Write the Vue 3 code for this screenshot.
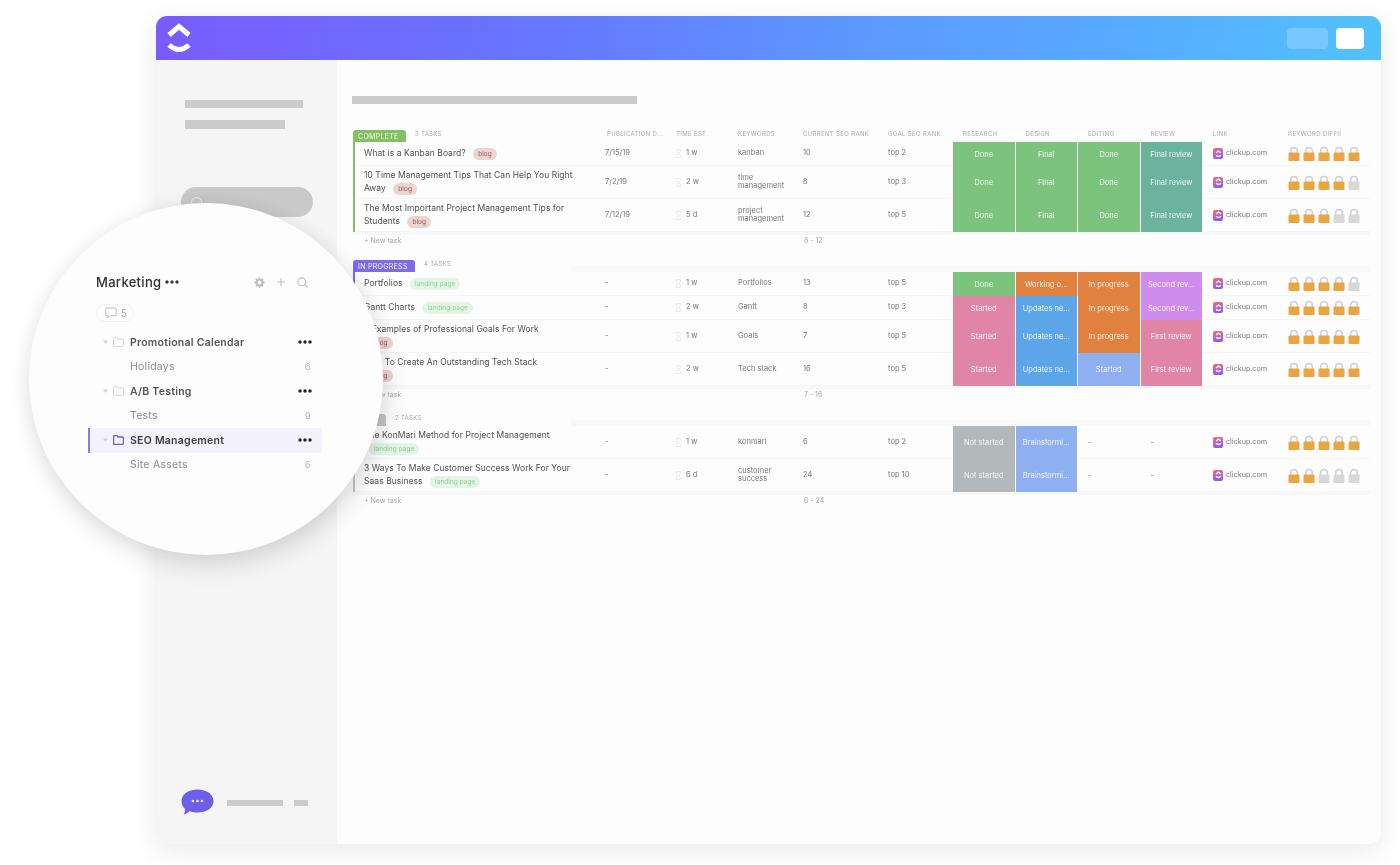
<template>
  <div class="page">
    <div class="window">
      <header class="topbar">
        <svg class="logo" width="26" height="31" viewBox="0 0 26 31">
          <path d="M3 12 L13 3.500 L23 12" fill="none" stroke="#fff" stroke-width="5" stroke-linejoin="miter" />
          <path d="M3 22 Q13 31 23 22" fill="none" stroke="#fff" stroke-width="5" />
        </svg>
        <div class="top-btn top-btn-soft"></div>
        <div class="top-btn top-btn-white"></div>
      </header>

      <div class="body">
        <aside class="sidebar">
          <div class="bar bar-one"></div>
          <div class="bar bar-two"></div>
          <div class="search-pill"><span class="search-ring"></span></div>
          <div class="chat-row">
            <svg width="33" height="27" viewBox="0 0 33 27">
              <path d="M16.500 0.500 C26 0.500 32.500 5.500 32.500 12 C32.500 19 25.500 23.500 16.500 23.500 C13.500 23.500 11 23.200 8.500 22.300 C7 23.800 5 25.200 2.500 25.500 C3.700 24 4.300 22 4.200 20 C1.800 18 0.500 15 0.500 12 C0.500 5.500 7 0.500 16.500 0.500 Z" fill="#6f5fe6" />
              <circle cx="12" cy="12" r="1.300" fill="#e8e4ff" />
              <circle cx="16.500" cy="12" r="1.300" fill="#e8e4ff" />
              <circle cx="21" cy="12" r="1.300" fill="#e8e4ff" />
            </svg>
            <div class="bar chat-bar-long"></div>
            <div class="bar chat-bar-short"></div>
          </div>
        </aside>

        <main class="content">
          <div class="bar page-title"></div>

          <section v-for="group in groups" :key="group.name" class="group">
            <div class="table-row group-head">
              <div class="head-first">
                <span class="status-tag" :class="group.tagClass">{{ group.name }}</span>
                <span class="task-count">{{ group.rows.length }} TASKS</span>
              </div>
              <template v-if="group.showColumns">
                <span v-for="col in columns" :key="col.label" class="col-label" :class="col.cls">{{ col.label }}</span>
              </template>
              <div v-else class="head-band"></div>
            </div>

            <div class="group-rows" :class="group.tagClass">
              <div v-for="row in group.rows" :key="row.title" class="table-row task-row">
                <div class="cell name-cell">
                  <div class="task-title">
                    {{ row.title }}
                    <span class="tag" :class="row.tag === 'blog' ? 'tag-blog' : 'tag-landing'">{{ row.tag }}</span>
                  </div>
                </div>
                <div class="cell date-cell">{{ row.date }}</div>
                <div class="cell time-cell">
                  <svg width="5" height="9" viewBox="0 0 5 9">
                    <path d="M0.500 0.500 H4.500 V2.500 L2.800 4.500 L4.500 6.500 V8.500 H0.500 V6.500 L2.200 4.500 L0.500 2.500 Z" fill="none" stroke="#e2e2e2" stroke-width="0.800" />
                  </svg>
                  <span>{{ row.time }}</span>
                </div>
                <div class="cell keyword-cell">{{ row.keyword }}</div>
                <div class="cell">{{ row.rank }}</div>
                <div class="cell">{{ row.goal }}</div>
                <div
                  v-for="(status, i) in row.statuses"
                  :key="i"
                  class="status-cell"
                  :class="status.color"
                >{{ status.text }}</div>
                <div class="cell link-cell">
                  <span class="site-icon">
                    <svg width="7" height="8" viewBox="0 0 7 8">
                      <path d="M1 3 L3.500 1 L6 3" fill="none" stroke="#fff" stroke-width="1.200" />
                      <path d="M1 5.300 Q3.500 7.700 6 5.300" fill="none" stroke="#fff" stroke-width="1.200" />
                    </svg>
                  </span>
                  <span>clickup.com</span>
                </div>
                <div class="cell lock-cell">
                  <svg v-for="n in 5" :key="n" width="12" height="15" viewBox="0 0 12 15">
                    <path d="M2.700 8 V5 C2.700 0.300 9.300 0.300 9.300 5 V8" fill="none" stroke="#cdced6" stroke-width="1.500" />
                    <rect x="0.500" y="6.500" width="11" height="8.500" rx="1" :fill="n <= row.locks ? '#e8a540' : '#d8d8d8'" />
                  </svg>
                </div>
              </div>
            </div>

            <div class="table-row new-task">
              <div class="new-task-label">+ New task</div>
              <div class="new-task-range">{{ group.range }}</div>
            </div>
          </section>
        </main>
      </div>
    </div>

    <div class="lens">
      <div class="lens-head">
        <span class="lens-title">Marketing</span>
        <svg class="title-dots" width="14" height="4" viewBox="0 0 14 4">
          <circle cx="2" cy="2" r="1.700" /><circle cx="7" cy="2" r="1.700" /><circle cx="12" cy="2" r="1.700" />
        </svg>
        <div class="lens-tools">
          <svg width="11" height="11" viewBox="0 0 12 12">
            <circle cx="6" cy="6" r="3.300" fill="none" stroke="#bdbdbd" stroke-width="2.400" />
            <path d="M6 0.300 V2 M6 10 V11.700 M0.300 6 H2 M10 6 H11.700 M2 2 L3.100 3.100 M8.900 8.900 L10 10 M10 2 L8.900 3.100 M3.100 8.900 L2 10" stroke="#bdbdbd" stroke-width="1.600" />
          </svg>
          <svg width="10" height="10" viewBox="0 0 10 10">
            <path d="M5 1 V9 M1 5 H9" stroke="#c4c4c4" stroke-width="1.200" />
          </svg>
          <svg width="11" height="11" viewBox="0 0 11 11">
            <circle cx="4.800" cy="4.800" r="3.900" fill="none" stroke="#bdbdbd" stroke-width="1.100" />
            <path d="M7.700 7.700 L10.300 10.300" stroke="#bdbdbd" stroke-width="1.100" />
          </svg>
        </div>
      </div>

      <div class="comment-pill">
        <svg width="12" height="12" viewBox="0 0 12 12">
          <path d="M1.500 1 H10.500 Q11.200 1 11.200 1.700 V8 Q11.200 8.700 10.500 8.700 H5 L2.800 11 V8.700 H1.500 Q0.800 8.700 0.800 8 V1.700 Q0.800 1 1.500 1 Z" fill="none" stroke="#b5b5b5" stroke-width="0.900" />
        </svg>
        <span>5</span>
      </div>

      <ul class="tree">
        <li v-for="item in tree" :key="item.label" class="tree-row" :class="{ 'tree-active': item.active, 'tree-folder': item.folder }">
          <template v-if="item.folder">
            <svg class="tree-caret" width="5" height="4" viewBox="0 0 5 4"><path d="M0 0.500 H5 L2.500 3.800 Z" fill="#d0d0d0" /></svg>
            <svg class="tree-icon" width="11" height="10" viewBox="0 0 11 10">
              <path d="M0.600 1.500 Q0.600 0.600 1.500 0.600 H4 L5 2 H9.500 Q10.400 2 10.400 2.900 V8.500 Q10.400 9.400 9.500 9.400 H1.500 Q0.600 9.400 0.600 8.500 Z" fill="none" :stroke="item.active ? '#6f5fe6' : '#cfcfcf'" :stroke-width="item.active ? 1.300 : 0.900" />
            </svg>
          </template>
          <span class="tree-label">{{ item.label }}</span>
          <svg v-if="item.folder" class="tree-dots" width="14" height="4" viewBox="0 0 14 4">
            <circle cx="2" cy="2" r="1.700" /><circle cx="7" cy="2" r="1.700" /><circle cx="12" cy="2" r="1.700" />
          </svg>
          <span v-else class="tree-count">{{ item.count }}</span>
        </li>
      </ul>
    </div>
  </div>
</template>

<script setup>
const columns = [
  { label: 'Publication d...', cls: 'col-date' },
  { label: 'Time est.' },
  { label: 'Keywords' },
  { label: 'Current SEO rank' },
  { label: 'Goal SEO rank' },
  { label: 'Research', cls: 'col-status' },
  { label: 'Design', cls: 'col-status' },
  { label: 'Editing', cls: 'col-status' },
  { label: 'Review', cls: 'col-status' },
  { label: 'Link', cls: 'col-link' },
  { label: 'Keyword diffii' },
]

const st = (text, color) => ({ text, color })
const done = st('Done', 'c-green')
const final = st('Final', 'c-green')
const finalReview = st('Final review', 'c-teal')
const started = st('Started', 'c-pink')
const updates = st('Updates ne...', 'c-blue')
const inProgress = st('In progress', 'c-orange')
const secondRev = st('Second rev...', 'c-violet')
const firstReview = st('First review', 'c-pink')
const notStarted = st('Not started', 'c-grey')
const brainstorm = st('Brainstormi...', 'c-sky')
const none = st('-', 'c-none')

const groups = [
  {
    name: 'COMPLETE',
    tagClass: 'is-complete',
    showColumns: true,
    range: '8 - 12',
    rows: [
      { title: 'What is a Kanban Board?', tag: 'blog', date: '7/15/19', time: '1 w', keyword: 'kanban', rank: '10', goal: 'top 2', locks: 5, statuses: [done, final, done, finalReview] },
      { title: '10 Time Management Tips That Can Help You Right Away', tag: 'blog', date: '7/2/19', time: '2 w', keyword: 'time management', rank: '8', goal: 'top 3', locks: 4, statuses: [done, final, done, finalReview] },
      { title: 'The Most Important Project Management Tips for Students', tag: 'blog', date: '7/12/19', time: '5 d', keyword: 'project management', rank: '12', goal: 'top 5', locks: 3, statuses: [done, final, done, finalReview] },
    ],
  },
  {
    name: 'IN PROGRESS',
    tagClass: 'is-progress',
    range: '7 - 16',
    rows: [
      { title: 'Portfolios', tag: 'landing page', date: '-', time: '1 w', keyword: 'Portfolios', rank: '13', goal: 'top 5', locks: 4, statuses: [done, st('Working o...', 'c-orange'), inProgress, secondRev] },
      { title: 'Gantt Charts', tag: 'landing page', date: '-', time: '2 w', keyword: 'Gantt', rank: '8', goal: 'top 3', locks: 5, statuses: [started, updates, inProgress, secondRev] },
      { title: '5 Examples of Professional Goals For Work', tag: 'blog', date: '-', time: '1 w', keyword: 'Goals', rank: '7', goal: 'top 5', locks: 5, statuses: [started, updates, inProgress, firstReview] },
      { title: 'How To Create An Outstanding Tech Stack', tag: 'blog', date: '-', time: '2 w', keyword: 'Tech stack', rank: '16', goal: 'top 5', locks: 5, statuses: [started, updates, st('Started', 'c-sky'), firstReview] },
    ],
  },
  {
    name: 'OPEN',
    tagClass: 'is-open',
    range: '6 - 24',
    rows: [
      { title: 'The KonMari Method for Project Management', tag: 'landing page', date: '-', time: '1 w', keyword: 'konmari', rank: '6', goal: 'top 2', locks: 5, statuses: [notStarted, brainstorm, none, none] },
      { title: '3 Ways To Make Customer Success Work For Your Saas Business', tag: 'landing page', date: '-', time: '6 d', keyword: 'customer success', rank: '24', goal: 'top 10', locks: 2, statuses: [notStarted, brainstorm, none, none] },
    ],
  },
]

const tree = [
  { label: 'Promotional Calendar', folder: true },
  { label: 'Holidays', count: 6 },
  { label: 'A/B Testing', folder: true },
  { label: 'Tests', count: 9 },
  { label: 'SEO Management', folder: true, active: true },
  { label: 'Site Assets', count: 6 },
]
</script>

<style scoped>
.page {
  position: relative;
  width: 1400px;
  height: 865px;
  padding: 16px 19px 0 156px;
  box-sizing: border-box;
  overflow: hidden;
  background: #fff;
  font-family: Inter, "Open Sans", sans-serif;
  color: #555;
  filter: blur(0.45px);
}
.window {
  height: 828px;
  border-radius: 11px;
  overflow: hidden;
  background: #fdfdfd;
  box-shadow: 0 6px 26px rgba(0, 0, 0, 0.09);
  display: flex;
  flex-direction: column;
}
.topbar {
  flex: 0 0 44px;
  display: flex;
  align-items: center;
  padding: 0 17px 0 10px;
  background: linear-gradient(100deg, #7a5bff 0%, #6677ff 32%, #5c9bff 60%, #57aaff 78%, #52c2fb 100%);
}
.logo {
  margin-right: auto;
}
.top-btn {
  height: 21px;
  border-radius: 4px;
}
.top-btn-soft {
  width: 41px;
  background: #7ac6ff;
  margin-right: 8px;
}
.top-btn-white {
  width: 28px;
  background: #fff;
}
.body {
  flex: 1;
  display: flex;
  min-height: 0;
}
.bar {
  background: #cbcbcb;
}
.sidebar {
  flex: 0 0 181px;
  box-sizing: border-box;
  padding: 40px 0 28px 29px;
  background: #f5f5f5;
  display: flex;
  flex-direction: column;
  align-items: flex-start;
}
.bar-one {
  width: 118px;
  height: 8px;
  margin-bottom: 12px;
}
.bar-two {
  width: 100px;
  height: 9px;
}
.search-pill {
  width: 132px;
  height: 30px;
  margin: 58px 0 0 -4px;
  border-radius: 15px;
  background: #c9c9c9;
  display: flex;
  padding-left: 10px;
  box-sizing: border-box;
  align-items: center;
}
.search-ring {
  width: 9px;
  height: 9px;
  border: 1px solid #efefef;
  border-radius: 50%;
}
.chat-row {
  margin: auto 0 0 -4px;
  display: flex;
  align-items: center;
}
.chat-bar-long {
  width: 56px;
  height: 6px;
  margin-left: 13px;
}
.chat-bar-short {
  width: 14px;
  height: 6px;
  margin-left: 11px;
}

.content {
  flex: 1;
  min-width: 0;
  padding: 36px 11px 0 15px;
}
.page-title {
  width: 285px;
  height: 8px;
  margin-bottom: 26px;
}
.group {
  margin-bottom: 12px;
}
.table-row {
  display: grid;
  grid-template-columns: 252px 72px 62px 65px 85px 65px repeat(4, 62.5px) 85px 82px;
}
.group-head {
  height: 12px;
}
.head-first {
  display: flex;
  align-items: flex-start;
  padding-left: 1px;
}
.status-tag {
  height: 12px;
  padding: 0 5px;
  min-width: 33px;
  box-sizing: border-box;
  border-radius: 3px 3px 0 0;
  color: #f2f9ee;
  font-size: 7px;
  line-height: 13px;
  letter-spacing: 0.3px;
  white-space: nowrap;
}
.status-tag.is-complete {
  width: 53px;
  background: #82c161;
}
.status-tag.is-progress {
  width: 62px;
  background: #7f6aec;
}
.status-tag.is-open {
  background: #c4c4c4;
}
.task-count {
  margin-left: 9px;
  font-size: 6px;
  line-height: 7px;
  color: #a9a9a9;
  letter-spacing: 0.3px;
}
.col-label {
  font-size: 6px;
  line-height: 7px;
  color: #a8a8a8;
  text-transform: uppercase;
  letter-spacing: 0.35px;
  white-space: nowrap;
  overflow: hidden;
}
.col-date {
  padding-left: 3px;
}
.col-status {
  padding-left: 10px;
}
.col-link {
  padding-left: 10px;
}
.head-band {
  grid-column: 2 / -1;
  height: 6px;
  margin: 6px 0 0 -33px;
  background: #f9f9f9;
}
.group-rows {
  border-left: 2px solid #ddd;
  margin-left: 1px;
}
.group-rows.is-complete {
  border-left-color: #82c161;
}
.group-rows.is-progress {
  border-left-color: #7f6aec;
}
.group-rows.is-open {
  border-left-color: #c4c4c4;
}
.task-row {
  grid-template-columns: 249px 72px 62px 65px 85px 65px repeat(4, 62.5px) 85px 82px;
  min-height: 24px;
}
.cell {
  display: flex;
  align-items: center;
  font-size: 7.500px;
  line-height: 8.500px;
  color: #777;
  border-bottom: 1px solid #f5f5f5;
  box-sizing: border-box;
}
.name-cell {
  padding: 3px 30px 3px 9px;
  color: #4f4f4f;
}
.task-title {
  font-size: 8.500px;
  line-height: 13px;
  letter-spacing: 0.05px;
}
.tag {
  display: inline-block;
  height: 12px;
  margin: 0 6px 0 5px;
  padding: 0 5px;
  border-radius: 6px;
  font-size: 6.500px;
  line-height: 12px;
  vertical-align: middle;
}
.tag-blog {
  background: #ead5d2;
  color: #a15a5a;
}
.tag-landing {
  background: #e3f6e4;
  color: #93d09c;
}
.date-cell {
  padding-left: 1px;
}
.time-cell {
  gap: 5px;
}
.keyword-cell {
  padding-right: 12px;
}
.status-cell {
  margin-right: 1px;
  display: flex;
  align-items: center;
  justify-content: center;
  color: rgba(255, 255, 255, 0.88);
  font-size: 7.500px;
  white-space: nowrap;
}
.c-green {
  background: #7cc47e;
}
.c-teal {
  background: #6bb39c;
}
.c-orange {
  background: #e0813f;
}
.c-violet {
  background: #cf8cec;
}
.c-pink {
  background: #e085a5;
}
.c-blue {
  background: #5ca5e8;
}
.c-sky {
  background: #8eaff0;
}
.c-grey {
  background: #b3b8ba;
}
.c-none {
  justify-content: flex-start;
  padding-left: 10px;
  color: #777;
  border-bottom: 1px solid #f5f5f5;
}
.link-cell {
  padding-left: 10px;
  gap: 3px;
  font-size: 7.200px;
}
.site-icon {
  width: 10px;
  height: 11px;
  border-radius: 2px;
  background: linear-gradient(160deg, #f4713f 0%, #c55fd0 45%, #6f63f0 100%);
  display: flex;
  align-items: center;
  justify-content: center;
}
.lock-cell {
  gap: 3px;
}
.new-task {
  height: 16px;
  align-items: center;
  border-top: 3px solid #f8f8f8;
  padding: 0 0 2px 1px;
  box-sizing: border-box;
  font-size: 7px;
  color: #a9a9a9;
}
.new-task-label {
  padding-left: 11px;
}
.new-task-range {
  grid-column: 5;
}

.lens {
  position: absolute;
  left: 29px;
  top: 203px;
  width: 354px;
  height: 352px;
  box-sizing: border-box;
  padding-top: 71px;
  border-radius: 50%;
  background: #fdfdfd;
  box-shadow: 3px 12px 24px rgba(0, 0, 0, 0.11), 0 0 14px 6px rgba(0, 0, 0, 0.035);
}
.lens-head {
  width: 212px;
  height: 16px;
  margin-left: 67px;
  display: flex;
  align-items: center;
}
.lens-title {
  font-size: 13px;
  font-weight: 500;
  letter-spacing: 0.3px;
  color: #2f2f2f;
}
.title-dots {
  margin-left: 4px;
  fill: #3a3a3a;
}
.lens-tools {
  margin-left: auto;
  display: flex;
  align-items: center;
  gap: 11px;
}
.comment-pill {
  width: 38px;
  height: 18px;
  margin: 14px 0 0 67px;
  box-sizing: border-box;
  padding-left: 8px;
  border: 1px solid #f2f2f2;
  border-radius: 9px;
  display: flex;
  align-items: center;
  gap: 4px;
  font-size: 10px;
  color: #aaa;
}
.tree {
  list-style: none;
  margin: 8px 0 0 59px;
  padding: 0;
  width: 234px;
}
.tree-row {
  height: 24.500px;
  box-sizing: border-box;
  display: flex;
  align-items: center;
  padding: 0 10px 0 42px;
  font-size: 10.500px;
  letter-spacing: 0.25px;
  color: #8a8a8a;
}
.tree-folder {
  padding-left: 15px;
  color: #555;
  font-weight: 600;
}
.tree-caret {
  margin-right: 5px;
}
.tree-icon {
  margin-right: 6px;
}
.tree-active {
  background: #f4f2fd;
  border-left: 2px solid #8b78ea;
  padding-left: 13px;
  color: #3f3f3f;
}
.tree-dots {
  margin-left: auto;
  fill: #222;
}
.tree-count {
  margin: 0 1px 0 auto;
  color: #b5b5b5;
  font-size: 9.500px;
}
</style>

<style>
html,
body {
  background: #fff;
}
</style>
